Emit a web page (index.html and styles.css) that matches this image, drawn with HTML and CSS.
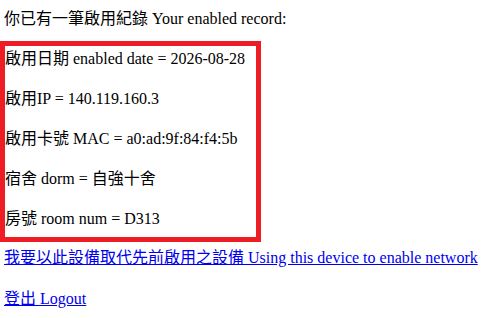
FILE: index.html
```html
<!DOCTYPE html>
<html lang="zh-Hant">
<head>
    <meta charset="UTF-8">
    <title>啟用紀錄</title>
    <link rel="stylesheet" href="styles.css">
</head>
<body>
    <p class="intro">你已有一筆啟用紀錄 Your enabled record:</p>

    <div class="record">
        <p>啟用日期 enabled date = 2026-08-28</p>
        <p>啟用IP = 140.119.160.3</p>
        <p>啟用卡號 MAC = a0:ad:9f:84:f4:5b</p>
        <p>宿舍 dorm = 自強十舍</p>
        <p>房號 room num = D313</p>
    </div>

    <p class="action"><a href="#">我要以此設備取代先前啟用之設備 Using this device to enable network</a></p>
    <p class="action logout"><a href="#">登出 Logout</a></p>
</body>
</html>
```

FILE: styles.css
```css
body {
    margin: 0;
    font-family: "Liberation Serif", "Noto Sans CJK TC", serif;
    font-size: 16px;
    line-height: 24px;
    color: #000;
    background: #fff;
}
.intro {
    margin: 7px 0 10px;
    padding-left: 4px;
}
.record {
    width: 251px;
    border: 5px solid #ee1c25;
    padding: 1px 0 6px;
}
.record p {
    margin: 0 0 16px;
}
.record p:last-child {
    margin-bottom: 0;
}
.action {
    margin: 4px 0 0;
    padding-left: 4px;
}
.logout {
    margin-top: 17px;
}
a {
    color: #0000ee;
}
```
